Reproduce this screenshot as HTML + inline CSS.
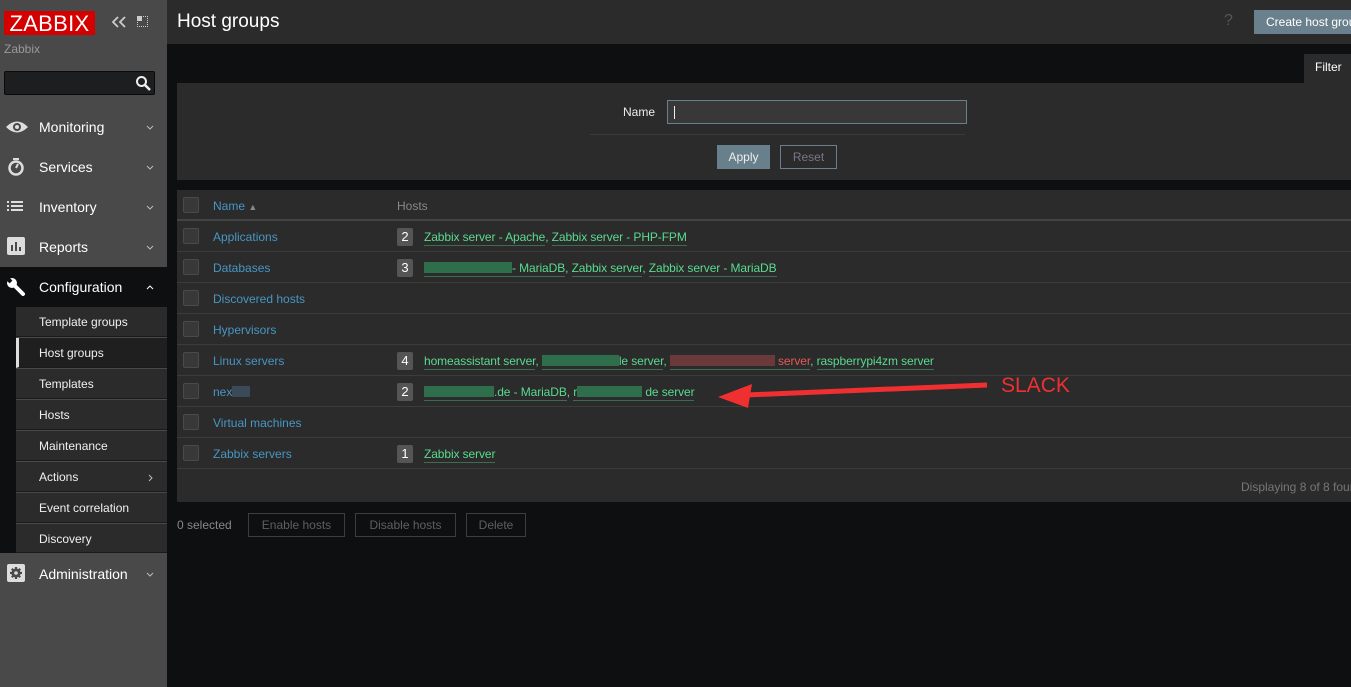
<!DOCTYPE html>
<html><head><meta charset="utf-8"><style>
*{box-sizing:border-box;margin:0;padding:0}
body{width:1351px;height:687px;overflow:hidden;background:#0e0f11;font-family:"Liberation Sans",Arial,sans-serif;font-size:12px;position:relative}
.a{position:absolute}
#side{left:0;top:0;width:167px;height:687px;background:#494949}
.logo{left:4px;top:11px;width:91px;height:24px;background:#d40000;color:#fff;font-size:22px;line-height:25px;text-align:center;letter-spacing:0.3px}
.menu{left:0;width:167px;height:40px;color:#fff;font-size:14px}
.menu span.t{position:absolute;left:39px;top:12px}
.menu svg.car{position:absolute;left:146px;top:18px}
.sub{left:16px;width:151px;height:30px;background:#2b2b2b;color:#f0f0f0;font-size:12px;border-bottom:1px solid #1a1a1a}
.sub span{position:absolute;left:23px;top:8px}
.row{left:177px;width:1174px;height:31px;border-bottom:1px solid #3c3c3c;background:#2b2b2b}
.cb{position:absolute;left:6px;top:7px;width:16px;height:16px;border:1px solid #4a4a4a;background:#383838;border-radius:2px}
.nm{position:absolute;left:36px;top:9px;color:#4796c4}
.bd{position:absolute;left:220px;top:7px;width:16px;height:18px;background:#555;color:#fff;border-radius:2px;text-align:center;line-height:18px;font-size:13px}
.hs{position:absolute;left:247px;top:9px;color:#59db8f;white-space:nowrap;letter-spacing:-0.1px}
.hs u{text-decoration:none;border-bottom:1px solid #3f6b52;padding-bottom:1px}
.bl{display:inline-block;height:11px;background:#2e6e4a;vertical-align:-1px}
.btn{top:513px;height:24px;border:1px solid #3d3d3d;color:#5f5f5f;line-height:22px;text-align:center}
</style></head><body>
<div id="side" class="a">
 <div class="a logo">ZABBIX</div>
 <svg class="a" style="left:111px;top:15px" width="16" height="14"><path d="M7 2L2 7l5 5M14 2L9 7l5 5" stroke="#ccc" stroke-width="1.8" fill="none"/></svg>
 <div class="a" style="left:137px;top:16px;width:11px;height:11px;border:1px dotted #ccc"></div>
 <div class="a" style="left:137px;top:16px;width:5px;height:5px;background:#ccc"></div>
 <div class="a" style="left:4px;top:42px;color:#999;font-size:12px">Zabbix</div>
 <div class="a" style="left:4px;top:71px;width:151px;height:24px;background:#1d1e1f;border:1px solid #0a0a0a;border-radius:2px"></div>
 <svg class="a" style="left:135px;top:75px" width="16" height="16"><circle cx="6.5" cy="6.5" r="4.5" stroke="#eee" stroke-width="2" fill="none"/><path d="M10 10l5 5" stroke="#eee" stroke-width="2.5"/></svg>
 <div class="a menu" style="top:107px"><svg class="a" style="left:5px;top:12px" width="24" height="16"><path d="M1 8Q12 -3 23 8Q12 19 1 8Z" fill="#ddd"/><circle cx="12" cy="8" r="4" fill="#494949"/><circle cx="12" cy="8" r="2" fill="#ddd"/></svg><span class="t">Monitoring</span><svg class="car" width="8" height="5"><path d="M1 1l3 3 3-3" stroke="#bbb" fill="none"/></svg></div>
 <div class="a menu" style="top:147px"><svg class="a" style="left:7px;top:10px" width="18" height="20"><circle cx="9" cy="11" r="6.5" stroke="#ddd" stroke-width="2.5" fill="none"/><path d="M6 2h6M9 11l2-4" stroke="#ddd" stroke-width="2"/></svg><span class="t">Services</span><svg class="car" width="8" height="5"><path d="M1 1l3 3 3-3" stroke="#bbb" fill="none"/></svg></div>
 <div class="a menu" style="top:187px"><svg class="a" style="left:7px;top:13px" width="18" height="14"><path d="M0 2h2M4 2h12M0 6h2M4 6h12M0 10h2M4 10h12" stroke="#ddd" stroke-width="2"/></svg><span class="t">Inventory</span><svg class="car" width="8" height="5"><path d="M1 1l3 3 3-3" stroke="#bbb" fill="none"/></svg></div>
 <div class="a menu" style="top:227px"><svg class="a" style="left:7px;top:10px" width="18" height="18"><rect width="18" height="18" rx="2" fill="#ddd"/><path d="M5 14V8M9 14V5M13 14V10" stroke="#494949" stroke-width="2"/></svg><span class="t">Reports</span><svg class="car" width="8" height="5"><path d="M1 1l3 3 3-3" stroke="#bbb" fill="none"/></svg></div>
 <div class="a menu" style="top:267px;background:#0e0f11"><svg class="a" style="left:6px;top:10px" width="20" height="20"><path d="M9 9L17 17" stroke="#fff" stroke-width="4" stroke-linecap="round"/><circle cx="6" cy="6" r="5" fill="#fff"/><path d="M0 0L5 5" stroke="#0e0f11" stroke-width="4"/></svg><span class="t">Configuration</span><svg class="car" width="8" height="5"><path d="M1 4l3-3 3 3" stroke="#fff" fill="none"/></svg></div>
 <div class="a" style="left:0;top:307px;width:16px;height:246px;background:#0e0f11"></div>
 <div class="a sub" style="top:307px"><span>Template groups</span></div>
 <div class="a sub" style="top:338px;background:#1f1f1f;border-left:3px solid #ddd"><span style="left:20px">Host groups</span></div>
 <div class="a sub" style="top:369px"><span>Templates</span></div>
 <div class="a sub" style="top:400px"><span>Hosts</span></div>
 <div class="a sub" style="top:431px"><span>Maintenance</span></div>
 <div class="a sub" style="top:462px"><span>Actions</span><svg class="a" style="left:132px;top:12px" width="5" height="8"><path d="M1 1l3 3-3 3" stroke="#bbb" fill="none"/></svg></div>
 <div class="a sub" style="top:493px"><span>Event correlation</span></div>
 <div class="a sub" style="top:524px;height:29px"><span>Discovery</span></div>
 <div class="a menu" style="top:554px"><svg class="a" style="left:7px;top:10px" width="18" height="18"><rect width="18" height="18" rx="2" fill="#ddd"/><path d="M9 3v12M3 9h12M4.8 4.8l8.4 8.4M13.2 4.8l-8.4 8.4" stroke="#494949" stroke-width="2.2"/><circle cx="9" cy="9" r="4.5" fill="#494949"/><circle cx="9" cy="9" r="1.8" fill="#ddd"/></svg><span class="t">Administration</span><svg class="car" width="8" height="5"><path d="M1 1l3 3 3-3" stroke="#bbb" fill="none"/></svg></div>
</div>
<div class="a" style="left:167px;top:0;width:1184px;height:44px;background:#2b2b2b"></div>
<div class="a" style="left:177px;top:11px;color:#fff;font-size:19px">Host groups</div>
<div class="a" style="left:1224px;top:12px;color:#555;font-size:16px">?</div>
<div class="a" style="left:1254px;top:10px;width:97px;height:24px;background:#6a808c;color:#fff;line-height:24px;padding-left:12px;white-space:nowrap;overflow:hidden">Create host group</div>
<div class="a" style="left:1304px;top:54px;width:47px;height:29px;background:#2b2b2b;color:#fff;line-height:27px;padding-left:11px">Filter</div>
<div class="a" style="left:177px;top:83px;width:1174px;height:97px;background:#2b2b2b"></div>
<div class="a" style="left:623px;top:105px;color:#eee">Name</div>
<div class="a" style="left:667px;top:100px;width:300px;height:24px;background:#383838;border:1px solid #68808c"><div class="a" style="left:6px;top:5px;width:1px;height:13px;background:#eee"></div></div>
<div class="a" style="left:590px;top:134px;width:375px;height:1px;background:#3a3a3a"></div>
<div class="a" style="left:717px;top:145px;width:53px;height:24px;background:#68808c;color:#eee;text-align:center;line-height:24px">Apply</div>
<div class="a" style="left:780px;top:145px;width:57px;height:24px;border:1px solid #68808c;color:#778;text-align:center;line-height:22px">Reset</div>
<div class="a row" style="top:190px;border-bottom:2px solid #444"><div class="cb"></div><span class="nm">Name <span style="color:#888;font-size:9px">▲</span></span><span class="a" style="left:220px;top:9px;color:#888">Hosts</span></div>
<div class="a row" style="top:221px"><div class="cb"></div><span class="nm">Applications</span><div class="bd">2</div><span class="hs"><u>Zabbix server - Apache</u>, <u>Zabbix server - PHP-FPM</u></span></div>
<div class="a row" style="top:252px"><div class="cb"></div><span class="nm">Databases</span><div class="bd">3</div><span class="hs"><u><span class="bl" style="width:88px"></span>- MariaDB</u>, <u>Zabbix server</u>, <u>Zabbix server - MariaDB</u></span></div>
<div class="a row" style="top:283px"><div class="cb"></div><span class="nm">Discovered hosts</span></div>
<div class="a row" style="top:314px"><div class="cb"></div><span class="nm">Hypervisors</span></div>
<div class="a row" style="top:345px"><div class="cb"></div><span class="nm">Linux servers</span><div class="bd">4</div><span class="hs"><u>homeassistant server</u>, <u><span class="bl" style="width:77px"></span>le server</u>, <u style="color:#e45959"><span class="bl" style="width:105px;background:#6a3a3a"></span> server</u>, <u>raspberrypi4zm server</u></span></div>
<div class="a row" style="top:376px"><div class="cb"></div><span class="nm">nex<span class="bl" style="width:18px;background:#3a4a58"></span></span><div class="bd">2</div><span class="hs"><u><span class="bl" style="width:70px"></span>.de - MariaDB</u>, <u>r<span class="bl" style="width:65px"></span> de server</u></span></div>
<div class="a row" style="top:407px"><div class="cb"></div><span class="nm">Virtual machines</span></div>
<div class="a row" style="top:438px"><div class="cb"></div><span class="nm">Zabbix servers</span><div class="bd">1</div><span class="hs"><u>Zabbix server</u></span></div>
<div class="a" style="left:177px;top:469px;width:1174px;height:33px;background:#2b2b2b"><span class="a" style="left:1064px;top:11px;color:#777;white-space:nowrap">Displaying 8 of 8 found</span></div>
<svg class="a" style="left:710px;top:378px" width="290" height="32"><path d="M277 7L36 17" stroke="#f03030" stroke-width="5"/><path d="M8 19L42 6L38 30Z" fill="#f03030"/></svg>
<div class="a" style="left:1001px;top:374px;color:#f03030;font-size:21px">SLACK</div>
<div class="a" style="left:177px;top:518px;color:#888">0 selected</div>
<div class="a btn" style="left:248px;width:97px">Enable hosts</div>
<div class="a btn" style="left:355px;width:101px">Disable hosts</div>
<div class="a btn" style="left:466px;width:60px">Delete</div>
</body></html>
